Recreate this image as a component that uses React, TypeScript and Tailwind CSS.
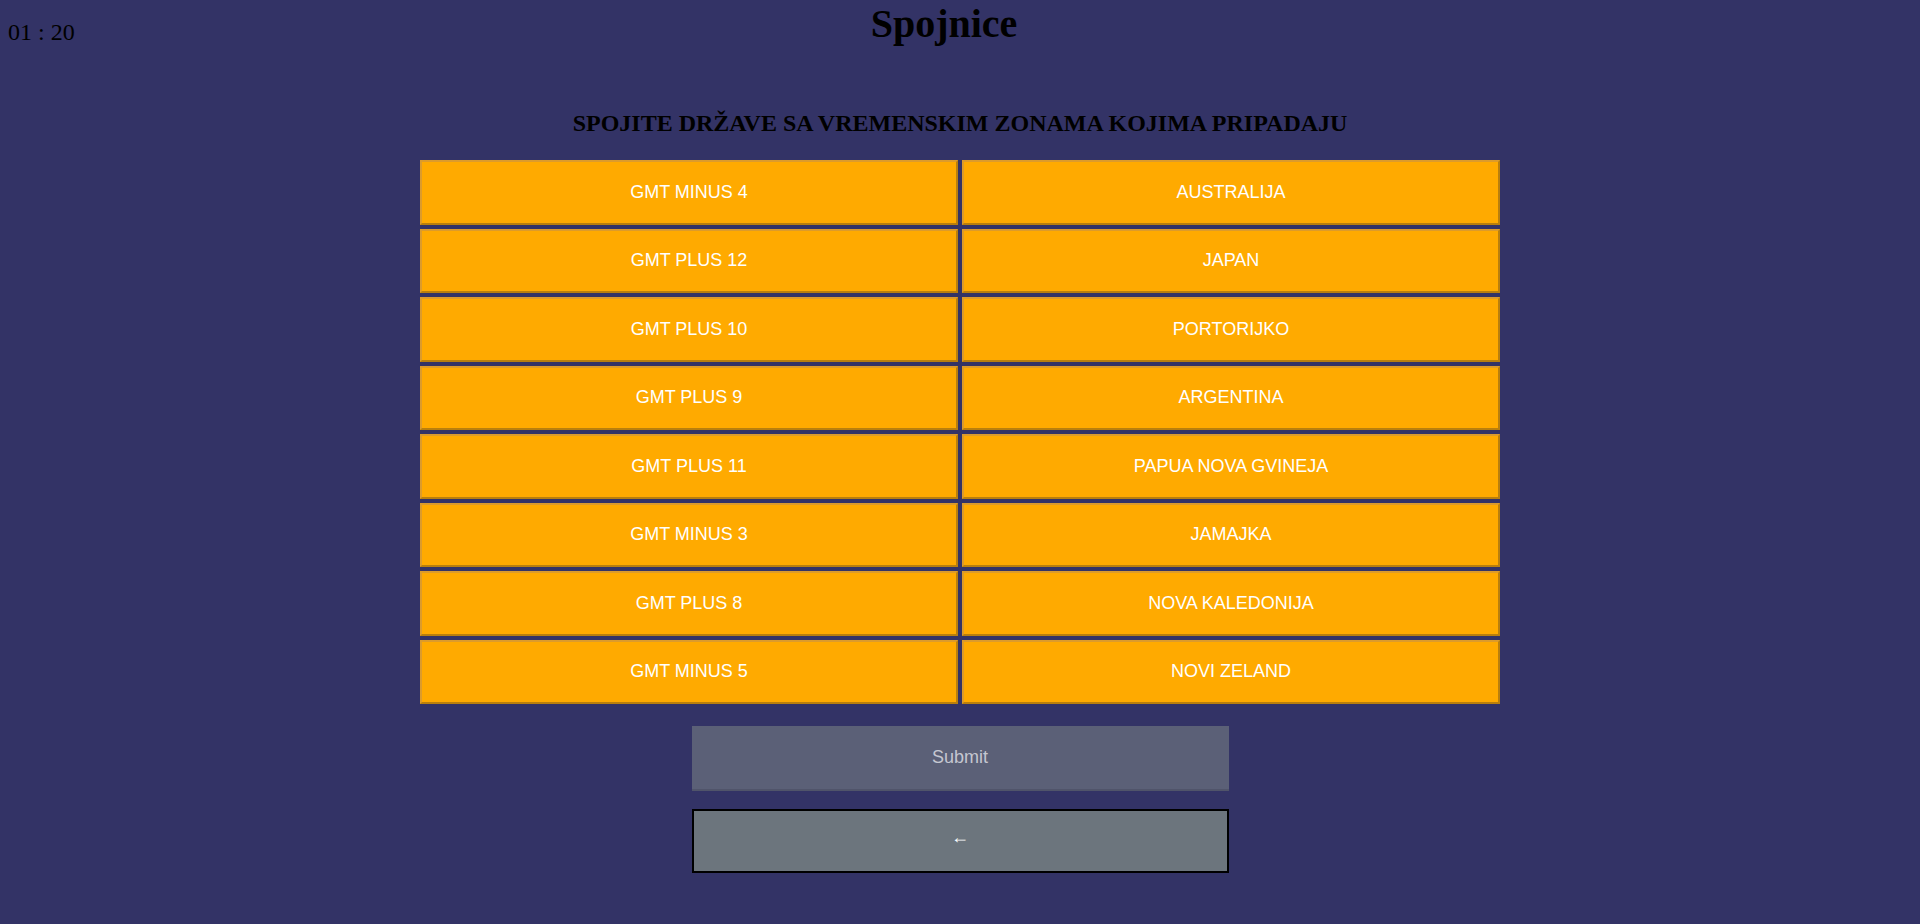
import React from 'react';

const pairs: [string, string][] = [
  ['GMT MINUS 4', 'AUSTRALIJA'],
  ['GMT PLUS 12', 'JAPAN'],
  ['GMT PLUS 10', 'PORTORIJKO'],
  ['GMT PLUS 9', 'ARGENTINA'],
  ['GMT PLUS 11', 'PAPUA NOVA GVINEJA'],
  ['GMT MINUS 3', 'JAMAJKA'],
  ['GMT PLUS 8', 'NOVA KALEDONIJA'],
  ['GMT MINUS 5', 'NOVI ZELAND'],
];

const Tile = ({ label }: { label: string }) => (
  <button
    type="button"
    className="h-[64.5px] w-full border-2 border-t-[#dc9b2b] border-l-[#dc9b2b] border-b-[#b97f0d] border-r-[#b97f0d] bg-[#ffaa00] text-[18px] text-white font-['Liberation_Sans',Arial,sans-serif]"
  >
    {label}
  </button>
);

export default function App() {
  return (
    <div className="relative min-h-screen bg-[#333366] font-['Liberation_Serif','Times_New_Roman',serif] text-black">
      {/* timer */}
      <div className="absolute left-2 top-[19px] text-[24px] leading-[normal]">01 : 20</div>

      <h1 className="m-0 pr-[32px] text-center text-[40px] font-bold leading-[normal]">Spojnice</h1>

      <h2 className="mt-[63px] text-center text-[24px] font-bold leading-[normal]">
        SPOJITE DRŽAVE SA VREMENSKIM ZONAMA KOJIMA PRIPADAJU
      </h2>

      <div className="mt-[23px] grid grid-cols-[538px_538px] justify-center gap-x-[4px] gap-y-[4px]">
        {pairs.map(([left, right]) => (
          <React.Fragment key={left}>
            <Tile label={left} />
            <Tile label={right} />
          </React.Fragment>
        ))}
      </div>

      <div className="mt-[22px] flex flex-col items-center gap-[18px] font-['Liberation_Sans',Arial,sans-serif]">
        <button
          type="button"
          disabled
          className="h-[65px] w-[537px] border-b-2 border-b-[#50546a] bg-[#5b6077] text-[18px] text-[#c5c7d1]"
        >
          Submit
        </button>
        <button
          type="button"
          className="h-[64px] w-[537px] border-2 border-black bg-[#6c757d] pb-[8px] text-[18px] text-white"
        >
          ←
        </button>
      </div>
    </div>
  );
}
